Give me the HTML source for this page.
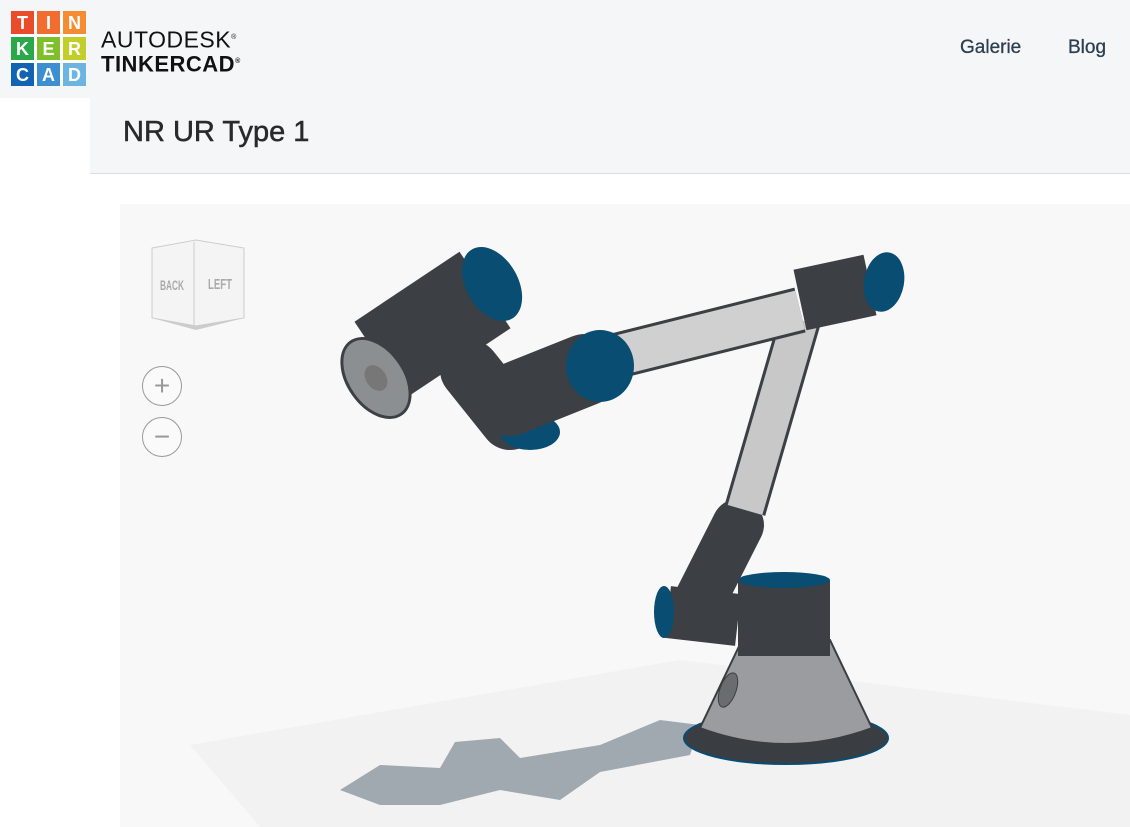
<!DOCTYPE html>
<html><head><meta charset="utf-8"><style>
*{margin:0;padding:0;box-sizing:border-box}
body{width:1130px;height:827px;overflow:hidden;background:#fff;font-family:"Liberation Sans",sans-serif;position:relative}
.hdr{position:absolute;left:0;top:0;width:1130px;height:98px;background:#f5f6f8}
.logo{position:absolute;left:11px;top:11px;display:grid;grid-template-columns:repeat(3,23px);gap:3px;background:#fff;padding:0}
.logo div{width:23px;height:23px;color:#fff;font-weight:bold;font-size:18px;text-align:center;line-height:24px}
.brand{position:absolute;left:101px;top:27px;line-height:22px;color:#111}
.brand .a{font-size:23px;letter-spacing:.5px}
.brand .t{font-size:22px;font-weight:bold;letter-spacing:.5px}
.nav{position:absolute;top:37px;font-size:19px;color:#2c3e50}
.title{position:absolute;left:90px;top:98px;width:1040px;height:76px;background:#f5f6f8;border-bottom:1px solid #dcdde0}
.title h1{position:absolute;left:33px;top:18px;font-size:29px;font-weight:normal;color:#2a2a2a;-webkit-text-stroke:.5px #2a2a2a}
.view{position:absolute;left:120px;top:204px;width:1010px;height:623px;background:#f8f8f8;overflow:hidden}
.btn{position:absolute;left:22px;width:40px;height:40px;border:1px solid #999;border-radius:50%;color:#999;font-size:28px;text-align:center;line-height:37px;background:#fafafa}
</style></head><body>
<div class="hdr">
<div class="logo">
<div style="background:#e94b2b">T</div><div style="background:#f26b2f">I</div><div style="background:#f58c33">N</div>
<div style="background:#2aa84a">K</div><div style="background:#7fbf2a">E</div><div style="background:#c2cf2a">R</div>
<div style="background:#1363b3">C</div><div style="background:#3d8fd1">A</div><div style="background:#6cb5e0">D</div>
</div>
<div class="brand"><div class="a">AUTODESK<sup style="font-size:7px">®</sup></div><div class="t">TINKERCAD<sup style="font-size:7px">®</sup></div></div>
<div class="nav" style="left:960px;-webkit-text-stroke:.3px #2c3e50">Galerie</div>
<div class="nav" style="left:1068px;-webkit-text-stroke:.3px #2c3e50">Blog</div>
</div>
<div class="title"><h1>NR UR Type 1</h1></div>
<div class="view">
<svg width="1010" height="623" viewBox="120 204 1010 623" style="position:absolute;left:0;top:0">
<polygon points="190,745 680,660 1130,715 1130,827 260,827" fill="#f2f2f2"/>
<polygon points="340,790 380,765 440,768 455,742 500,738 520,758 600,745 660,720 700,725 690,755 600,772 560,800 500,790 440,805 380,805" fill="#a0a8b0"/>
<!-- cube -->
<polygon points="152,248 196,240 244,248 244,318 196,326 152,318" fill="#f4f4f4" stroke="#ccc"/>
<line x1="194" y1="242" x2="194" y2="326" stroke="#ccc"/>
<polygon points="152,318 196,330 244,318 196,326" fill="#ccc"/>
<text x="172" y="290" font-size="14" fill="#aaa" text-anchor="middle" font-weight="bold" textLength="24" lengthAdjust="spacingAndGlyphs">BACK</text>
<text x="220" y="289" font-size="15" fill="#aaa" text-anchor="middle" font-weight="bold" textLength="24" lengthAdjust="spacingAndGlyphs">LEFT</text>
<!-- base -->
<ellipse cx="786" cy="738" rx="102" ry="26" fill="#3a3d42" stroke="#0a4d73" stroke-width="2"/>
<path d="M742,640 L700,728 Q786,760 872,728 L830,640 Z" fill="#9a9c9f" stroke="#3a3d42" stroke-width="2"/>
<rect x="738" y="580" width="92" height="76" fill="#3c3f44"/>
<ellipse cx="784" cy="580" rx="46" ry="8" fill="#0a4d73"/>
<ellipse cx="728" cy="690" rx="8" ry="18" fill="#6a6d70" stroke="#3a3d42" transform="rotate(20 728 690)"/>
<!-- lower joint -->
<line x1="668" y1="612" x2="738" y2="620" stroke="#3c3f44" stroke-width="52" />
<ellipse cx="664" cy="612" rx="10" ry="26" fill="#0a4d73"/>
<line x1="700" y1="600" x2="738" y2="525" stroke="#3c3f44" stroke-width="52" stroke-linecap="round"/>
<!-- long tube -->
<line x1="745" y1="510" x2="800" y2="320" stroke="#3c3f44" stroke-width="42"/>
<line x1="745" y1="510" x2="800" y2="320" stroke="#c8c8c8" stroke-width="36"/>
<!-- upper tube -->
<line x1="600" y1="360" x2="800" y2="310" stroke="#3c3f44" stroke-width="46"/>
<line x1="600" y1="360" x2="800" y2="310" stroke="#d0d0d0" stroke-width="40"/>
<!-- shoulder joint -->
<line x1="800" y1="300" x2="870" y2="285" stroke="#3c3f44" stroke-width="62"/>
<ellipse cx="884" cy="282" rx="20" ry="30" fill="#0a4d73" transform="rotate(10 884 282)"/>
<!-- wrist -->
<line x1="470" y1="370" x2="510" y2="420" stroke="#3c3f44" stroke-width="60" stroke-linecap="round"/>
<ellipse cx="530" cy="432" rx="30" ry="18" fill="#0a4d73"/>
<line x1="510" y1="400" x2="585" y2="370" stroke="#3c3f44" stroke-width="72" stroke-linecap="round"/>
<ellipse cx="600" cy="366" rx="34" ry="36" fill="#0a4d73"/>
<!-- end cylinder -->
<line x1="380" y1="360" x2="485" y2="290" stroke="#3c3f44" stroke-width="92"/>
<ellipse cx="492" cy="284" rx="26" ry="40" fill="#0a4d73" transform="rotate(-30 492 284)"/>
<ellipse cx="376" cy="378" rx="28" ry="44" fill="#8c8f92" stroke="#3c3f44" stroke-width="3" transform="rotate(-35 376 378)"/>
<ellipse cx="376" cy="378" rx="10" ry="14" fill="#777" transform="rotate(-35 376 378)"/>
</svg>
<div class="btn" style="top:162px">+</div>
<div class="btn" style="top:213px">−</div>
</div>
</body></html>
